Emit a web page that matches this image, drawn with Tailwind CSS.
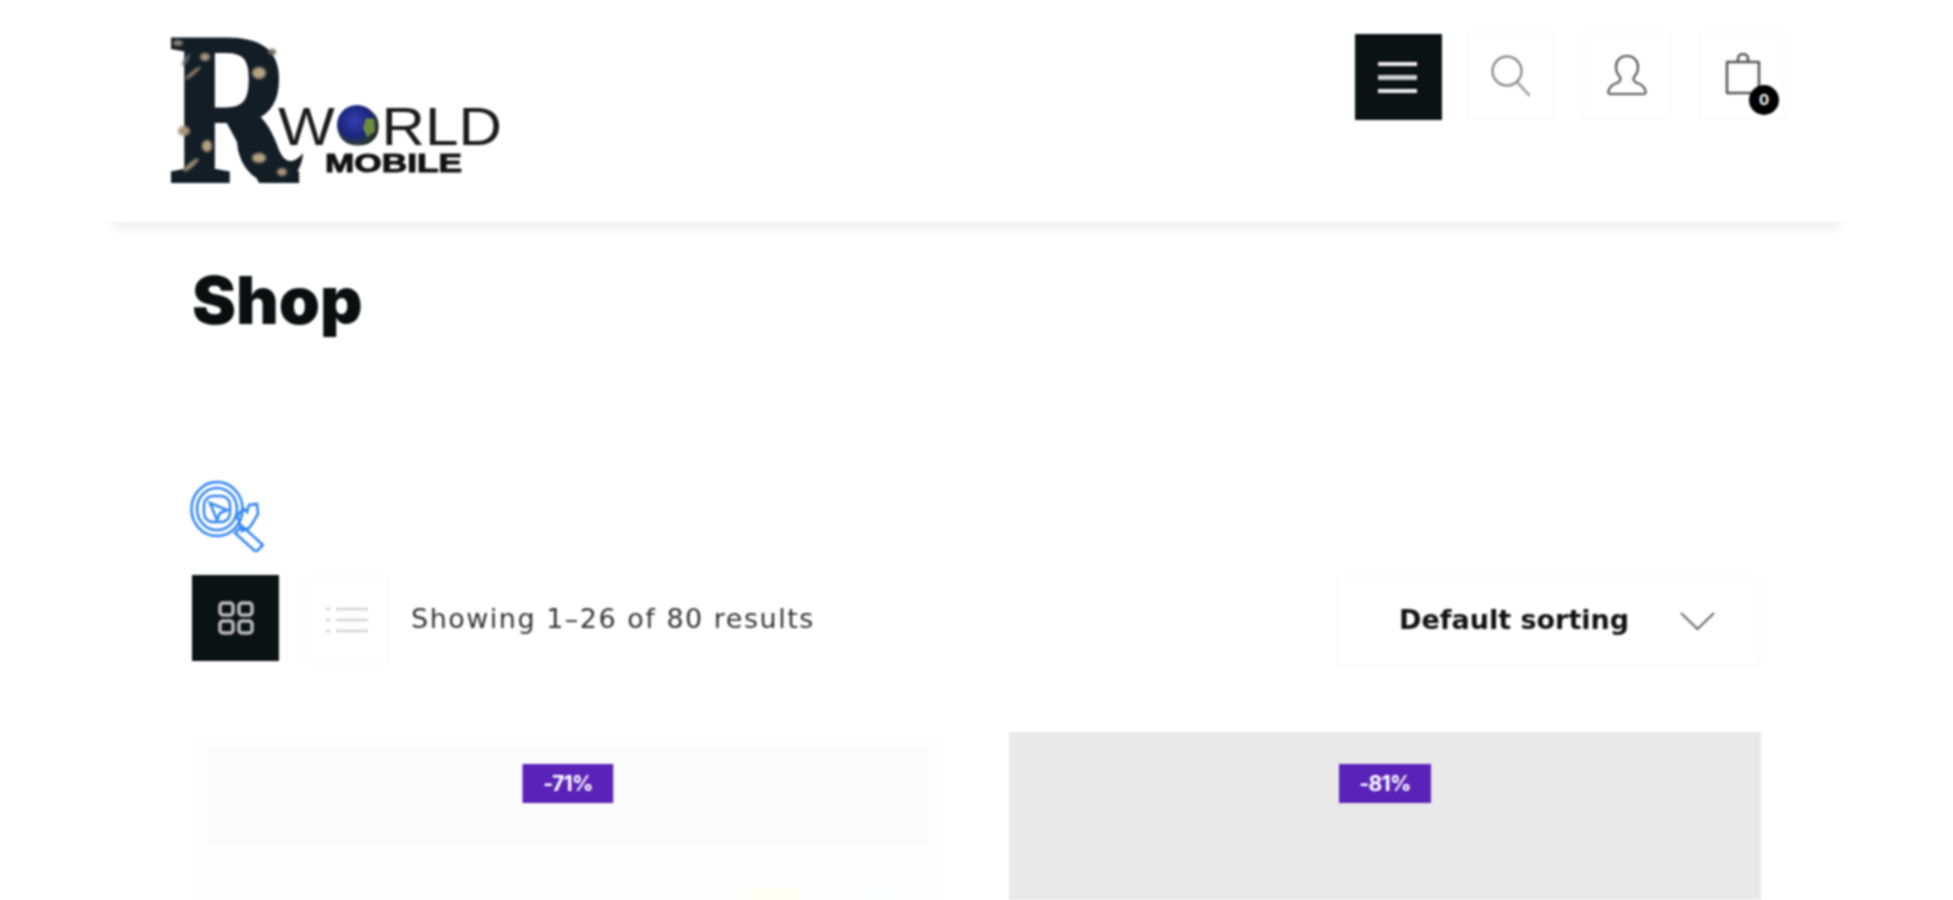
<!DOCTYPE html>
<html lang="en">
<head>
<meta charset="utf-8">
<title>Shop</title>
<script src="https://cdn.jsdelivr.net/npm/@tailwindcss/browser@4"></script>
</head>
<body class="bg-white h-[900px] overflow-hidden font-['Inter',sans-serif] text-[#0b0f10]">
<div class="blur-[0.8px] h-[900px] overflow-hidden">
  <header class="mx-[106px] h-[223px] pl-[65px] pr-[62px] flex items-start justify-between bg-white shadow-[0_12px_12px_-8px_rgba(0,0,0,0.09)] border-b border-[#f1f1f1]">
    <svg class="mt-[37px]" width="340" height="150" viewBox="171 37 340 150" role="img" aria-label="R World Mobile">
      <defs>
        <radialGradient id="gl" cx="45%" cy="40%" r="60%">
          <stop offset="0" stop-color="#3340b0"/><stop offset=".65" stop-color="#1c2680"/><stop offset="1" stop-color="#2c3d30"/>
        </radialGradient>
      </defs>
      <text x="168" y="181" font-family="Liberation Serif" font-weight="700" font-size="216" textLength="128" lengthAdjust="spacingAndGlyphs" fill="#121d26" stroke="#121d26" stroke-width="4">R</text>
      <path d="M245 108C262 112 272 130 279 150 284 162 292 166 303 153 302 170 292 183 274 183 255 182 243 170 238 150 236 130 232 118 226 110Z" fill="#121d26"/>
      <g class="blur-[1px]" fill="#a8957a">
        <ellipse cx="178" cy="43" rx="5" ry="3" fill="#8e8676"/>
        <ellipse cx="205" cy="57" rx="5" ry="4"/>
        <ellipse cx="193" cy="73" rx="10" ry="2" transform="rotate(-40 193 73)" fill="#8c7e6a"/>
        <ellipse cx="186" cy="60" rx="7" ry="2" transform="rotate(-60 186 60)" fill="#5f6a70"/>
        <ellipse cx="259" cy="73" rx="7" ry="6" fill="#b5a183"/>
        <ellipse cx="272" cy="52" rx="4" ry="3" fill="#6f675a"/>
        <ellipse cx="184" cy="131" rx="6" ry="5"/>
        <ellipse cx="207" cy="146" rx="5" ry="6" fill="#b5a183"/>
        <ellipse cx="191" cy="165" rx="10" ry="2.500" transform="rotate(-40 191 165)" fill="#9c8b72"/>
        <ellipse cx="259" cy="158" rx="7" ry="5" fill="#b5a183"/>
        <ellipse cx="282" cy="172" rx="5" ry="4"/>
      </g>
      <text x="278" y="145" font-family="Liberation Sans" font-size="53" textLength="224" lengthAdjust="spacingAndGlyphs" fill="#1a1a1a">WORLD</text>
      <circle cx="357" cy="125" r="20" fill="url(#gl)"/>
      <path d="M366 118l8 1 1 12-8 6-4-9z" fill="#6f8c3c"/>
      <text x="325" y="172" font-family="Liberation Sans" font-weight="700" font-size="26" textLength="137" lengthAdjust="spacingAndGlyphs" stroke="#111" stroke-width="1" fill="#111">MOBILE</text>
    </svg>
    <div class="mt-[31px] flex items-start">
      <button class="mt-[3px] w-[87px] h-[86px] bg-[#0b1214] flex flex-col items-center justify-center gap-[9px] pr-[3px]" aria-label="Menu">
        <span class="block w-[39px] h-[4px] bg-[#eee]"></span>
        <span class="block w-[39px] h-[5px] bg-[#ccc]"></span>
        <span class="block w-[39px] h-[4px] bg-[#eee]"></span>
      </button>
      <button class="ml-[24px] w-[88px] h-[89px] border-2 border-[#fafafa] flex items-center justify-center" aria-label="Search">
        <svg width="40" height="44" viewBox="0 0 40 44" fill="none" stroke="#777" stroke-width="2"><circle cx="17" cy="17" r="14.500"/><path d="M27 28l13 14" stroke-width="2.500" stroke="#999"/></svg>
      </button>
      <button class="ml-[29px] w-[88px] h-[89px] border-2 border-[#fafafa] flex items-center justify-center" aria-label="Account">
        <svg width="40" height="42" viewBox="0 0 40 42" fill="none" stroke="#555" stroke-width="2.200" stroke-linejoin="round"><path d="M20 1c-7 0-11 5-11 11 0 5 2 8 4 10 1 2 0 5-3 6-4 1-7 3-8.500 8-.5 2 0 3 2 3h33c2 0 2.500-1 2-3-1.500-5-4.500-7-8.500-8-3-1-4-4-3-6 2-2 4-5 4-10 0-6-4-11-11-11z"/></svg>
      </button>
      <button class="relative ml-[27px] w-[87px] h-[89px] border-2 border-[#fafafa] flex items-start justify-start" aria-label="Cart">
        <svg class="ml-[25px] mt-[20px]" width="36" height="42" viewBox="0 0 36 42" fill="none" stroke="#555" stroke-width="2.500" stroke-linejoin="round"><path d="M2 9h32v31H2z"/><path d="M13 9V6a5 5 0 0 1 10 0v3"/></svg>
        <span class="absolute left-[49px] top-[52px] w-[30px] h-[30px] rounded-full bg-black text-white text-[15px] font-bold leading-[30px] text-center">0</span>
      </button>
    </div>
  </header>

  <main class="px-[192px]">
    <h1 class="font-black text-[66px] leading-[72px] mt-[41px] text-[#0b0d0e]">Shop</h1>
    <svg class="mt-[144px] -ml-[2px]" width="74" height="72" viewBox="0 0 74 72" fill="none" stroke="#2f84f0" stroke-width="2.500" role="img" aria-label="Zoom">
      <ellipse cx="27" cy="29" rx="25.500" ry="27"/><ellipse cx="27" cy="29" rx="20" ry="21"/><rect x="14" y="16" width="26" height="26" rx="9"/>
      <path d="M20 23l17 7-7 3-3 7z"/>
      <path d="M47 35l7-6 3 3 2-7 8-1 1 10-6 10-3 4-7 3z"/>
      <path d="M45 53l7-7 21 19-7 7z"/>
    </svg>
    <div class="mt-[23px] flex items-start">
      <button class="w-[87px] h-[86px] bg-[#0b1214] flex items-center justify-center" aria-label="Grid view">
        <svg width="36" height="34" viewBox="0 0 36 34" fill="none" stroke="#bbb" stroke-width="3.500"><rect x="2" y="2" width="13" height="12" rx="3"/><rect x="21" y="2" width="13" height="12" rx="3"/><rect x="2" y="20" width="13" height="12" rx="3"/><rect x="21" y="20" width="13" height="12" rx="3"/></svg>
      </button>
      <button class="ml-[24px] w-[87px] h-[90px] border-2 border-[#fafafa] flex items-center justify-center" aria-label="List view">
        <svg width="42" height="28" viewBox="0 0 42 28" stroke="#d4d4d4" stroke-width="2.500"><path d="M0 3h4M10 3h32M0 14h4M10 14h32M0 25h4M10 25h32"/></svg>
      </button>
      <p class="ml-[21px] h-[90px] leading-[90px] text-[27px] tracking-[1.5px] text-[#333] -mt-[1px] whitespace-nowrap font-['DejaVu_Sans',sans-serif]">Showing 1–26 of 80 results</p>
      <div class="ml-auto w-[425px] h-[91px] border-2 border-[#fafafa] flex items-center pl-[61px] pr-[44px] justify-between">
        <span class="text-[27px] font-bold text-[#111] whitespace-nowrap font-['DejaVu_Sans',sans-serif]">Default sorting</span>
        <svg class="shrink-0" width="35" height="20" viewBox="0 0 35 20" fill="none" stroke="#666" stroke-width="2"><path d="M1 2l16.500 16L34 2"/></svg>
      </div>
    </div>
    <div class="mt-[66px] grid grid-cols-2 gap-x-[65px]">
      <article class="relative h-[170px] bg-[#fefefe] pt-[16px] px-[17px]">
        <div class="h-[97px] bg-[#fbfbfb]"></div>
        <span class="absolute left-1/2 -translate-x-1/2 top-[32px] w-[91px] h-[39px] bg-[#5a22b8] text-white text-[21px] font-bold leading-[39px] text-center tracking-[-0.03em]">-71%</span>
        <span class="absolute left-[558px] top-[157px] w-[50px] h-[13px] bg-[#fffff4]"></span>
        <span class="absolute left-[668px] top-[157px] w-[35px] h-[13px] bg-[#fbfefe]"></span>
      </article>
      <article class="relative h-[170px] bg-[#e9e9e9]">
        <span class="absolute left-1/2 -translate-x-1/2 top-[32px] w-[92px] h-[39px] bg-[#5a22b8] text-white text-[21px] font-bold leading-[39px] text-center tracking-[-0.03em]">-81%</span>
      </article>
    </div>
  </main>
</div>
</body>
</html>
